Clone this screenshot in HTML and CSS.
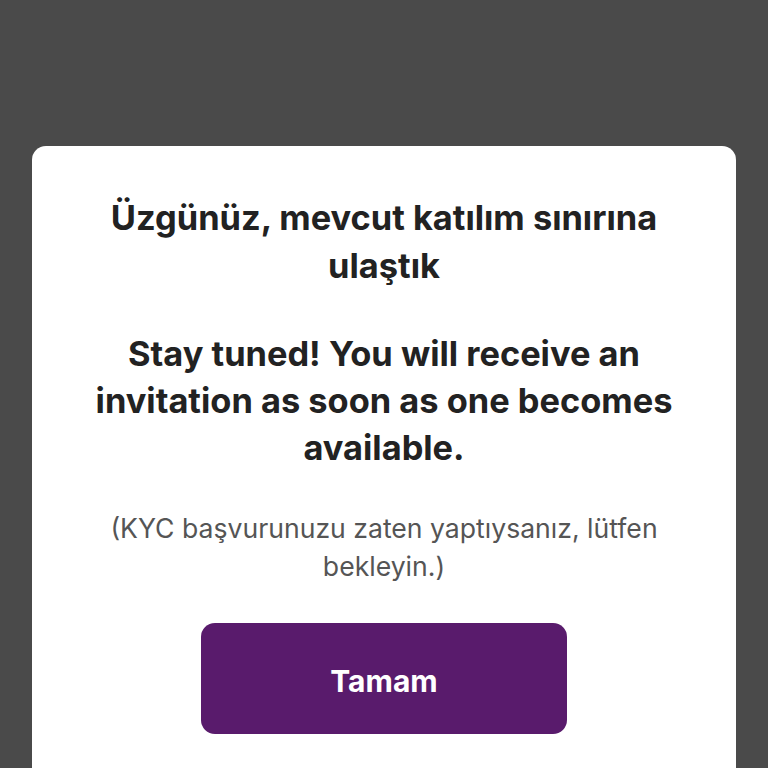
FILE: index.html
```html
<!DOCTYPE html>
<html lang="tr">
<head>
<meta charset="utf-8">
<link rel="stylesheet" href="styles.css">
</head>
<body>
<div class="screen">
  <div class="card">
    <h1 class="title">Üzgünüz, mevcut katılım sınırına ulaştık</h1>
    <p class="message">Stay tuned! You will receive an invitation as soon as one becomes available.</p>
    <p class="note">(KYC başvurunuzu zaten yaptıysanız, lütfen bekleyin.)</p>
    <button class="ok">Tamam</button>
  </div>
</div>
</body>
</html>
```
FILE: styles.css
```css
html, body {
  margin: 0;
  padding: 0;
  background: #4a4a4a;
}
.screen {
  width: 768px;
  height: 768px;
  overflow: hidden;
  padding-top: 146px;
  box-sizing: border-box;
}
.card {
  margin: 0 32px;
  min-height: 700px;
  background: #ffffff;
  border-radius: 14px;
  padding: 48px 40px 60px;
  box-sizing: border-box;
  display: flex;
  flex-direction: column;
  align-items: center;
  font-family: Inter, "Noto Sans", sans-serif;
  text-align: center;
}
.title {
  margin: 0;
  font-size: 34.4px;
  line-height: 48px;
  font-weight: 700;
  color: #222222;
  max-width: 600px;
}
.message {
  margin: 39.5px 0 0;
  font-size: 34.4px;
  line-height: 47px;
  font-weight: 700;
  color: #222222;
  max-width: 600px;
}
.note {
  margin: 38.5px 0 0;
  font-size: 26.6px;
  line-height: 38px;
  font-weight: 400;
  color: #555555;
  max-width: 600px;
}
.ok {
  margin-top: 38px;
  width: 366px;
  height: 111px;
  flex-shrink: 0;
  padding: 4px 0 0;
  border: none;
  border-radius: 14px;
  background: #591b6c;
  color: #ffffff;
  font-family: Inter, "Noto Sans", sans-serif;
  font-size: 30px;
  font-weight: 700;
}
```
